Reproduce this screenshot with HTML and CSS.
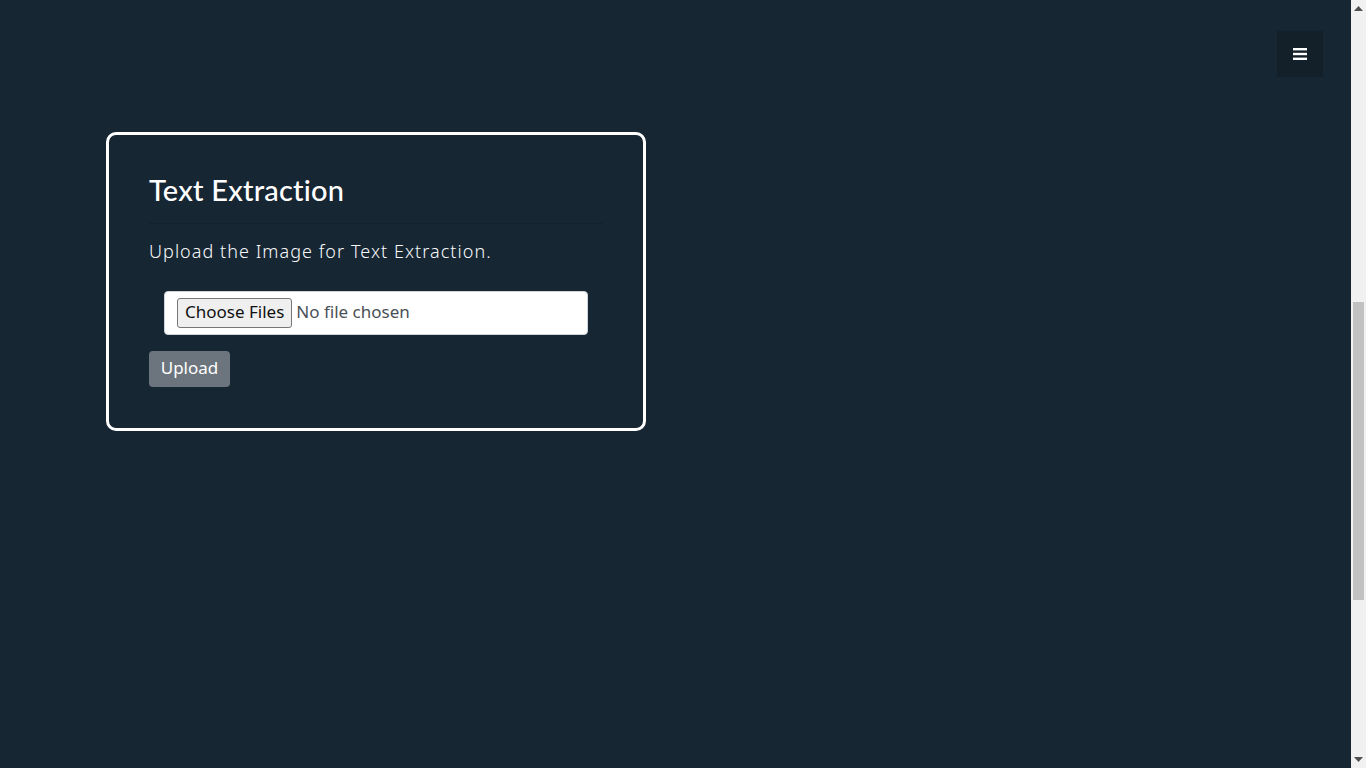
FILE: index.html
```html
<!DOCTYPE html>
<html lang="en">
<head>
<meta charset="utf-8">
<title>Text Extraction</title>
<link rel="stylesheet" href="styles.css">
</head>
<body>
<div class="page">
  <main class="extract-section">
    <div class="card">
      <h2 class="card-title">Text Extraction</h2>
      <hr class="divider">
      <p class="lead">Upload the Image for Text Extraction.</p>
      <form class="upload-form">
        <div class="file-wrap">
          <input class="file-input" type="file" multiple>
        </div>
        <button class="btn-upload" type="button">Upload</button>
      </form>
    </div>
  </main>
  <button class="menu-toggle" type="button" aria-label="Menu">
    <svg width="14" height="12" viewBox="0 0 14 12"><rect x="0" y="0" width="14" height="2.4" fill="#fff"/><rect x="0" y="4.8" width="14" height="2.4" fill="#fff"/><rect x="0" y="9.6" width="14" height="2.4" fill="#fff"/></svg>
  </button>
</div>
<div class="scrollbar" aria-hidden="true">
  <div class="sb-btn"><svg width="9" height="5" viewBox="0 0 9 5"><path d="M0 5 L4.5 0 L9 5 Z" fill="#505050"/></svg></div>
  <div class="sb-track"><div class="sb-thumb"></div></div>
  <div class="sb-btn"><svg width="9" height="5" viewBox="0 0 9 5"><path d="M0 0 L4.5 5 L9 0 Z" fill="#505050"/></svg></div>
</div>
</body>
</html>
```

FILE: styles.css
```css
html, body {
  height: 100%;
}
body {
  margin: 0;
  background: #172633;
  font-family: "Noto Sans", "DejaVu Sans", sans-serif;
  color: #fff;
  display: flex;
  overflow: hidden;
}
.page {
  flex: 1;
  position: relative;
}
.scrollbar {
  width: 15px;
  height: 100%;
  background: #f1f1f1;
  display: flex;
  flex-direction: column;
}
.sb-btn {
  height: 17px;
  display: flex;
  align-items: center;
  justify-content: center;
}
.sb-btn svg {
  display: block;
}
.sb-track {
  flex: 1;
  padding-top: 285px;
  padding-left: 2px;
  padding-right: 2px;
}
.sb-thumb {
  height: 298px;
  background: #c1c1c1;
}
.menu-toggle {
  position: absolute;
  top: 31px;
  right: 28px;
  width: 46px;
  height: 46px;
  background: #131f29;
  border: none;
  padding: 0;
  display: flex;
  align-items: center;
  justify-content: center;
  cursor: pointer;
}
.extract-section {
  padding: 132px 0 0 106px;
}
.card {
  width: 540px;
  box-sizing: border-box;
  border: 3px solid #fff;
  border-radius: 10px;
  padding: 37px 40px 41px 40px;
}
.card-title {
  margin: 0;
  font-family: "Lato", "Open Sans", sans-serif;
  font-weight: 500;
  font-size: 29px;
  line-height: 36px;
  letter-spacing: 0.2px;
}
.divider {
  border: none;
  border-top: 1px solid rgba(0, 0, 0, 0.12);
  margin: 15px 0 15px 0;
}
.lead {
  margin: 0 0 28px;
  font-size: 18px;
  line-height: 24px;
  letter-spacing: 1.05px;
  font-weight: 300;
  color: #f7f9fb;
}
.upload-form {
  display: flex;
  flex-direction: column;
  align-items: flex-start;
}
.file-wrap {
  align-self: stretch;
  margin: 0 15px 16px;
}
.file-input {
  display: block;
  width: 100%;
  height: 44px;
  box-sizing: border-box;
  background: #fff;
  border: 1px solid #ced4da;
  border-radius: 4px;
  padding: 0 12px 4px;
  font-family: "Noto Sans", sans-serif;
  font-size: 17px;
  color: #495057;
}
.file-input::file-selector-button {
  font-family: "Noto Sans", sans-serif;
  font-size: 17px;
  color: #111;
  background: #efefef;
  border: 1px solid #767676;
  border-radius: 3px;
  height: 30px;
  padding: 0 7px 3px;
  margin: 6px 4px 0 0;
}
.btn-upload {
  background: #6c757d;
  color: #fff;
  border: none;
  border-radius: 4px;
  width: 81px;
  height: 36px;
  font-family: "Noto Sans", sans-serif;
  font-size: 17px;
  padding: 0 0 4px;
}
```
